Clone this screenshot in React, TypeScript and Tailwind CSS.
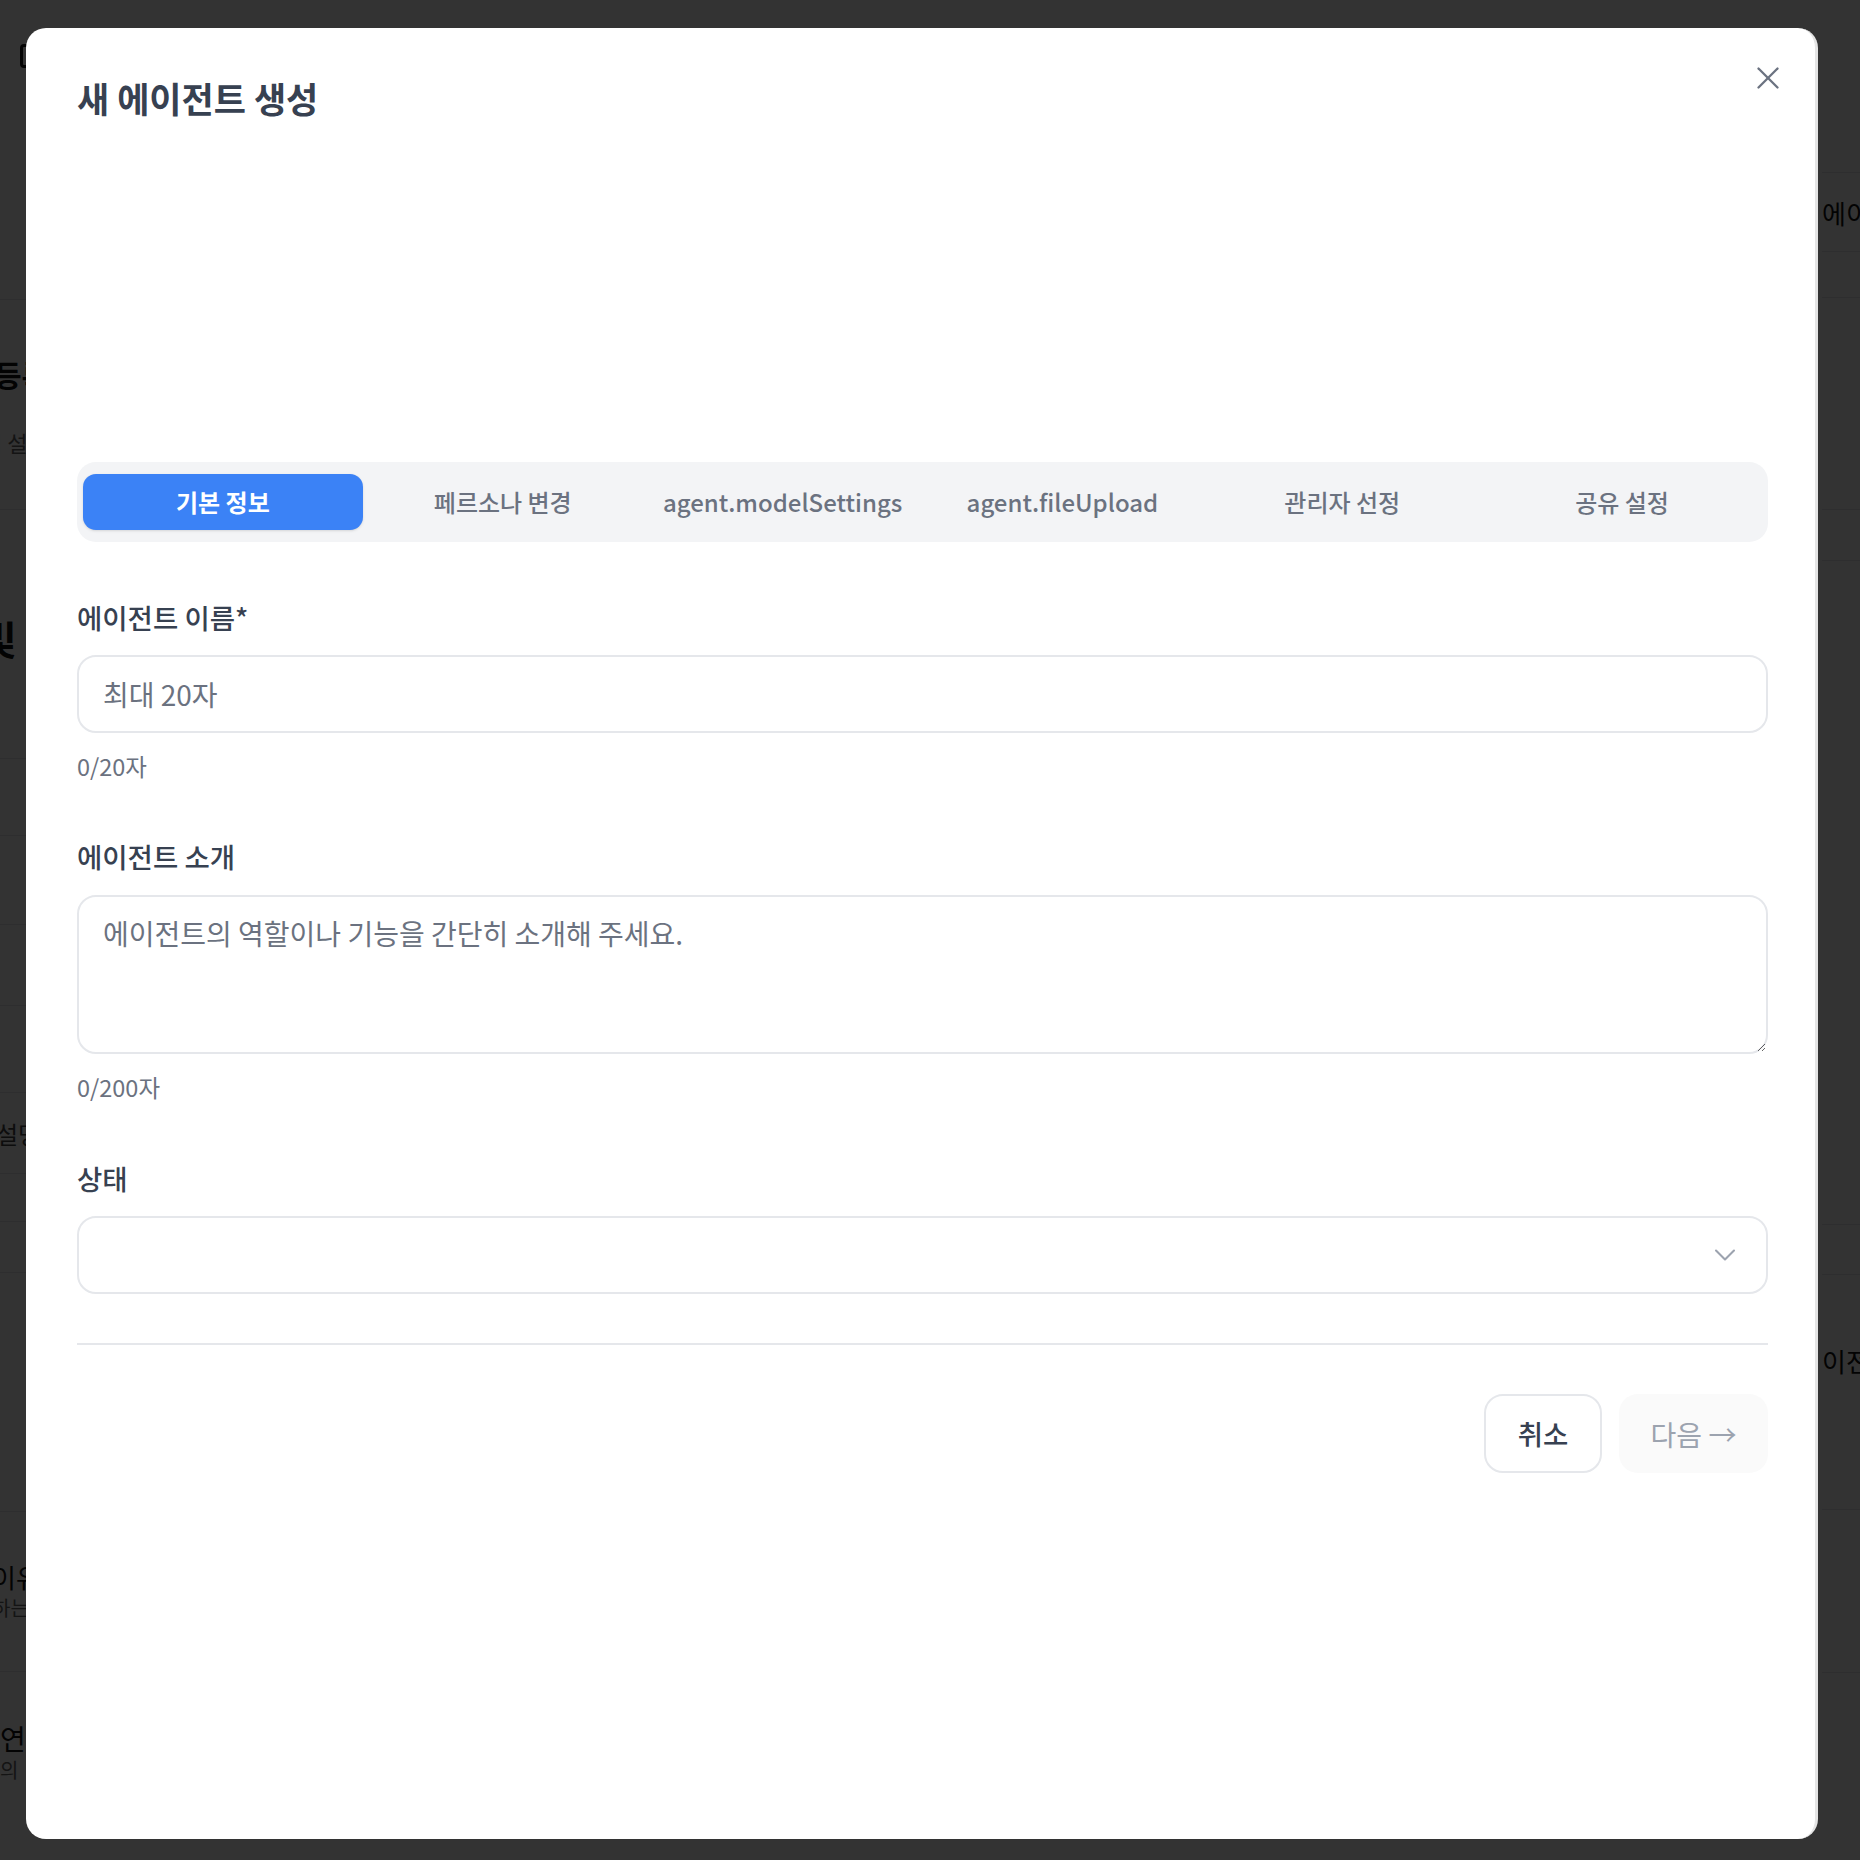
import { X, ChevronDown } from 'lucide-react';

const tabs = ['기본 정보', '페르소나 변경', 'agent.modelSettings', 'agent.fileUpload', '관리자 선정', '공유 설정'];

// page behind the dialog — only its edges show through the overlay
function BackgroundPage() {
  return (
    <div className="grid grid-cols-2 w-[1860px] h-[1860px] bg-white overflow-hidden">
      {/* Left column */}
      <div className="flex flex-col">
        <div className="h-[300px] border-b border-[#e5e7eb] pt-[44px] pl-[20px]">
          <div className="w-[18px] h-[24px] rounded-[4px] border-[3px] border-[#111]" />
        </div>
        <div className="h-[210px] border-b border-[#e5e7eb] -ml-[6px] pt-[52px]">
          <p className="text-[30px] font-bold text-[#111] leading-[44px]">등록 정보</p>
          <p className="mt-[30px] text-[22px] text-[#666] -ml-[12px]">접 설정</p>
        </div>
        <div className="h-[249px] border-b border-[#e5e7eb] -ml-[20px] pt-[100px]">
          <p className="text-[40px] font-bold text-[#111] leading-[56px]">빛</p>
        </div>
        <div className="h-[77px] border-b border-[#e5e7eb]" />
        <div className="h-[89px] border-b border-[#e5e7eb]" />
        <div className="h-[81px] border-b border-[#e5e7eb]" />
        <div className="h-[87px] border-b border-[#e5e7eb]" />
        <div className="h-[81px] border-b border-[#e5e7eb] -ml-[4px] pt-[24px]">
          <p className="text-[24px] text-[#444] leading-[34px]">설명</p>
        </div>
        <div className="h-[48px] border-b border-[#e5e7eb]" />
        <div className="h-[51px] border-b border-[#e5e7eb]" />
        <div className="h-[239px] border-b border-[#e5e7eb]" />
        <div className="h-[160px] border-b border-[#e5e7eb] -ml-[8px] pt-[48px]">
          <p className="text-[26px] text-[#111] leading-[34px]">이유</p>
          <p className="text-[20px] text-[#666] leading-[28px]">하는</p>
        </div>
        <div className="h-[188px] pt-[48px]">
          <p className="text-[28px] text-[#111] leading-[36px]">연</p>
          <p className="text-[20px] text-[#666] leading-[28px]">의</p>
        </div>
      </div>

      {/* Right column */}
      <div className="flex flex-col pl-[892px]">
        <div className="h-[173px] border-b border-[#e5e7eb]" />
        <div className="h-[79px] border-b border-[#e5e7eb] flex items-center whitespace-nowrap">
          <p className="text-[26px] text-[#111]">에이전트</p>
        </div>
        <div className="h-[46px] border-b border-[#e5e7eb]" />
        <div className="h-[212px] border-b border-[#e5e7eb]" />
        <div className="h-[51px] border-b border-[#e5e7eb]" />
        <div className="h-[664px] border-b border-[#e5e7eb]" />
        <div className="h-[50px] border-b border-[#e5e7eb]" />
        <div className="h-[235px] border-b border-[#e5e7eb] pt-[66px] whitespace-nowrap">
          <p className="text-[26px] text-[#111]">이전</p>
        </div>
        <div className="h-[163px] border-b border-[#e5e7eb]" />
      </div>
    </div>
  );
}

function Field({ label, children }: { label: string; children: React.ReactNode }) {
  return (
    <div className="flex flex-col">
      <label className="text-[27.5px] leading-[38px] font-medium text-[#374151]">{label}</label>
      {children}
    </div>
  );
}

export default function App() {
  return (
    <div className="relative w-[1860px] h-[1860px] overflow-hidden font-['Noto_Sans_CJK_KR','Noto_Sans',sans-serif]">
      <BackgroundPage />

      {/* overlay */}
      <div className="fixed inset-0 bg-black/80" />

      {/* dialog */}
      <div className="fixed left-[26px] top-[28px] w-[1792px] h-[1811px] rounded-[20px] bg-white border-r-[3px] border-[#e4e4e4] pl-[51px] pr-[47px] pt-[51px] flex flex-col">
        <button className="absolute right-[28px] top-[31px] text-[#6b7280]">
          <X size={38} strokeWidth={1.5} />
        </button>

        <h2 className="pt-[1px] text-[35px] leading-[36px] font-bold text-[#374151]">새 에이전트 생성</h2>

        {/* tabs */}
        <div className="mt-[346px] grid grid-cols-6 h-[80px] rounded-[19px] bg-[#f3f4f6] px-[6px] py-[12px]">
          {tabs.map((tab, i) => (
            <button
              key={tab}
              className={
                i === 0
                  ? 'h-[56px] rounded-[13px] bg-[#3b82f6] text-white text-[24px] font-semibold shadow-sm'
                  : 'h-[56px] rounded-[13px] text-[#6b7280] text-[24px] font-medium'
              }
            >
              {tab}
            </button>
          ))}
        </div>

        {/* form */}
        <div className="mt-[56px] flex flex-col">
          <Field label="에이전트 이름*">
            <input
              className="mt-[19px] h-[78px] rounded-[19px] border-2 border-[#e5e7eb] px-[24px] text-[28px] text-[#374151] placeholder:text-[#6b7280] outline-none"
              placeholder="최대 20자"
            />
            <p className="mt-[17px] text-[23.5px] leading-[32px] text-[#6b7280]">0/20자</p>
          </Field>

          <div className="mt-[55px]">
            <Field label="에이전트 소개">
              <textarea
                className="mt-[20px] h-[159px] rounded-[19px] border-2 border-[#e5e7eb] px-[24px] py-[17px] text-[28px] leading-[38px] text-[#374151] placeholder:text-[#6b7280] outline-none"
                placeholder="에이전트의 역할이나 기능을 간단히 소개해 주세요."
              />
              <p className="mt-[17px] text-[23.5px] leading-[32px] text-[#6b7280]">0/200자</p>
            </Field>
          </div>

          <div className="mt-[56px]">
            <Field label="상태">
              <div className="mt-[19px] h-[78px] rounded-[19px] border-2 border-[#e5e7eb] pr-[23px] flex items-center justify-end text-[#9ca3af]">
                <ChevronDown size={36} strokeWidth={1.4} />
              </div>
            </Field>
          </div>

          <div className="mt-[49px] border-t-2 border-[#e5e7eb]" />

          <div className="mt-[49px] flex justify-end gap-[17px]">
            <button className="w-[118px] h-[79px] rounded-[19px] border-2 border-[#e5e7eb] text-[27.5px] font-medium text-[#374151]">
              취소
            </button>
            <button className="w-[149px] h-[79px] rounded-[19px] bg-[#fafafa] text-[28px] text-[#9ca3af]">
              다음 →
            </button>
          </div>
        </div>
      </div>
    </div>
  );
}
